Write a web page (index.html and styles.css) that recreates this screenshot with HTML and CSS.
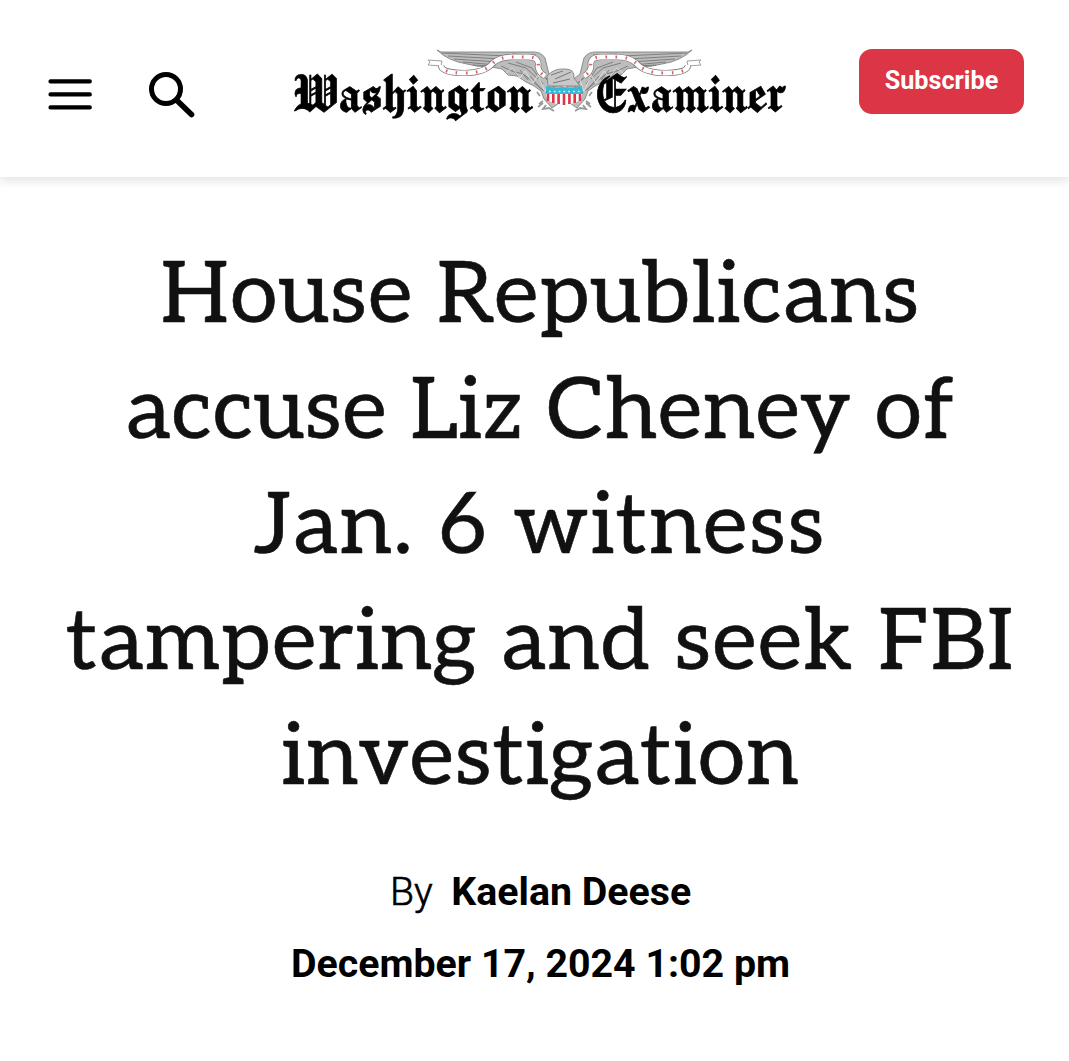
FILE: index.html
```
<!DOCTYPE html>
<html lang="en">
<head>
  <meta charset="UTF-8">
  <meta name="viewport" content="width=device-width, initial-scale=1.0">
  <link rel="stylesheet" href="styles.css">
  <title>House Republicans accuse Liz Cheney of Jan. 6 witness tampering and seek FBI investigation</title>
</head>
<body>
  <header class="header">
    <button class="btnMenu" aria-label="Menu">
      <svg width="44" height="32" viewBox="0 0 44 32">
        <path d="M2.5 3.4H41.8M2.5 16.4H41.8M2.5 29.4H41.8" stroke="#000" stroke-width="4.2" stroke-linecap="round"/>
      </svg>
    </button>
    <button class="btnSearch" aria-label="Search">
      <svg width="48" height="48" viewBox="0 0 48 48" fill="none" stroke="#000" stroke-linecap="round">
        <circle cx="18" cy="18" r="14.5" stroke-width="5"/>
        <path d="M29 29.5L43.5 43.5" stroke-width="5.6"/>
      </svg>
    </button>
    <a class="logo" href="#">
      <svg width="500" height="90" viewBox="290 40 500 90">
        <defs>
          <g id="wing">
            <path d="M437 50Q440 53 447 52H530Q541 51 545 58L549 74Q554 79 562 82V101L552 108L544 99L541 91L534 86L526 82L517 76L508 75L502 69L491 67Q477 67 467 64Q448 61 437 50Z" fill="#bdbdbd" stroke="#777" stroke-width=".8"/>
            <path d="M442 53L507 56M448 56L502 59M454 59L498 62M463 62L496 65M473 65L492 66M512 54L536 55M501 66L512 71L523 74L532 81M508 63L526 68L538 79M516 62L532 68L543 84M530 76L541 89L550 94M540 66L545 78L556 86M546 78L558 92M534 83L547 93M520 70L528 80M511 68L518 76" fill="none" stroke="#777" stroke-width=".9"/>
            <path d="M506 73L512 68L520 78L525 71L533 83L538 75L545 92L549 80" fill="none" stroke="#e2e2e2" stroke-width=".9"/>
            <path d="M428 60L442 61L441 66L428 65L430 62Z" fill="#fff" stroke="#888" stroke-width=".8"/>
            <path d="M441 65Q441 73 464 73Q485 73 493 63Q500 57 512 57H528Q540 57 538 67Q539 73 545 76" fill="none" stroke="#777" stroke-width="6.2"/>
            <path d="M441 65Q441 73 464 73Q485 73 493 63Q500 57 512 57H528Q540 57 538 67Q539 73 545 76" fill="none" stroke="#fff" stroke-width="4.8"/>
            <path d="M441 65Q441 73 464 73Q485 73 493 63Q500 57 512 57H528Q540 57 538 67Q539 73 545 76" fill="none" stroke="#d8606a" stroke-width="3.2" stroke-dasharray="1.6 8.4" stroke-dashoffset="-8"/>
            <path d="M540 96L537 92M543 103L538 107M543 101L539 104M546 105L543 109L549 108L554 111" fill="none" stroke="#999" stroke-width="1.8"/>
          </g>
        </defs>
        <use href="#wing"/>
        <use href="#wing" transform="translate(1129 0) scale(-1 1)"/>
        <path d="M547 76Q554 68 565 69Q575 69 574 78L580 86H548Z" fill="#c8c8c8" stroke="#777" stroke-width=".8"/>
        <path d="M551 75L563 71M555 79L571 72M553 83L570 79" stroke="#777" stroke-width="1"/>
        <path d="M546 94H582Q583 103 564 105Q545 103 546 94Z" fill="#fff"/>
        <path d="M548 94V101M553.3 94V103M558.6 94V104M564 94V105M569.4 94V104M574.7 94V103M580 94V101" stroke="#dc3545" stroke-width="2.6"/>
        <path d="M546 86Q555 89 564 87Q573 89 582 86L583 94H546Z" fill="#35b7d6"/>
        <path d="M549 91.5H581" stroke="#d7f4fa" stroke-width="1.6" stroke-dasharray="1.8 3"/>
        <g class="logoText">
          <text x="292" y="112" textLength="241" lengthAdjust="spacingAndGlyphs">Washington</text>
          <text x="593" y="112" textLength="192" lengthAdjust="spacingAndGlyphs">Examiner</text>
        </g>
      </svg>
    </a>
    <a class="btnSubscribe" href="#">Subscribe</a>
  </header>

  <main class="article">
    <h1 class="title">
      <span class="line line1">House Republicans</span>
      <span class="line line2">accuse Liz Cheney of</span>
      <span class="line line3">Jan. 6 witness</span>
      <span class="line line4">tampering and seek FBI</span>
      <span class="line line5">investigation</span>
    </h1>
    <div class="byline">By <a class="author" href="#">Kaelan Deese</a></div>
    <time class="date">December 17, 2024 1:02 pm</time>
  </main>
</body>
</html>
```
FILE: styles.css
```
* {
  box-sizing: border-box;
}
body {
  margin: 0;
  background: #fff;
  color: #000;
  font-family: Roboto, "Liberation Sans", sans-serif;
}
a {
  color: inherit;
  text-decoration: none;
}
button {
  padding: 0;
  border: 0;
  background: none;
  cursor: pointer;
}
svg {
  display: block;
  overflow: visible;
}

.header {
  display: flex;
  align-items: flex-start;
  height: 177px;
  padding: 40px 45px 0 48px;
  box-shadow: 0 4px 9px rgba(0, 0, 0, 0.11);
}
.btnMenu {
  margin-top: 38px;
}
.btnSearch {
  margin: 31px 0 0 56px;
}
.logo {
  margin-left: 94px;
}
.logoText {
  font-family: "Old English Text MT", "Manufacturing Consent", "Pirata One", "UnifrakturCook", "Liberation Serif", serif;
  font-size: 60px;
  font-weight: 400;
  stroke: #000;
  stroke-width: 0.7px;
}
.btnSubscribe {
  width: 165px;
  height: 65px;
  margin: 9px 0 0 auto;
  border-radius: 13px;
  background: #dc3545;
  color: #fff;
  font-size: 25.2px;
  font-weight: 700;
  line-height: 63px;
  text-align: center;
}

.article {
  padding: 61px 0 0 12px;
  text-align: center;
}
.title {
  margin: 0;
  color: #111;
  font-family: "Roboto Slab", Aleo, "DejaVu Serif Condensed", "DejaVu Serif", serif;
  font-size: 86px;
  font-weight: 400;
  line-height: 115.5px;
  letter-spacing: 1.2px;
  -webkit-text-stroke: 0.6px #111;
}
.line {
  display: block;
  white-space: nowrap;
}
.line2 {
  letter-spacing: 0.7px;
}
.line3 {
  letter-spacing: 1.9px;
}
.byline {
  margin-top: 41px;
  font-size: 39.3px;
  font-weight: 300;
  line-height: 71px;
  -webkit-text-stroke: 0.6px #000;
}
.author {
  margin-left: 9px;
  font-weight: 700;
  -webkit-text-stroke: 0;
}
.date {
  display: block;
  font-size: 39.3px;
  font-weight: 700;
  line-height: 72px;
}
```
